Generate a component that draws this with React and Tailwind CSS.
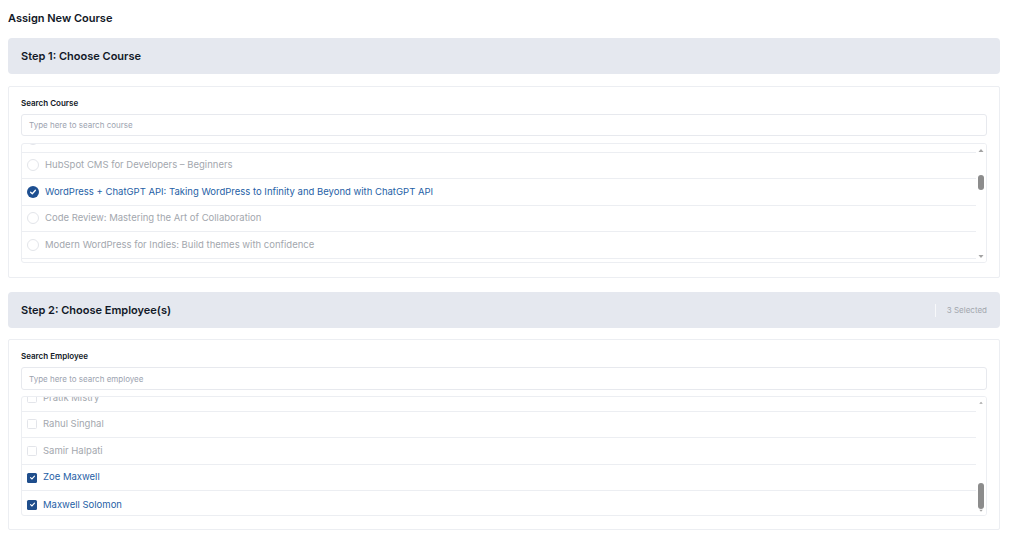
import React from 'react';

const courses = [
    { name: 'Designing Scalable Systems with Headless CMS', checked: false },
    { name: 'HubSpot CMS for Developers – Beginners', checked: false },
    { name: 'WordPress + ChatGPT API: Taking WordPress to Infinity and Beyond with ChatGPT API', checked: true },
    { name: 'Code Review: Mastering the Art of Collaboration', checked: false },
    { name: 'Modern WordPress for Indies: Build themes with confidence', checked: false },
];

const employees = [
    { name: 'Pratik Mistry', checked: false },
    { name: 'Rahul Singhal', checked: false },
    { name: 'Samir Halpati', checked: false },
    { name: 'Zoe Maxwell', checked: true },
    { name: 'Maxwell Solomon', checked: true },
];

const Radio = ({ checked }) => (
    checked ? (
        <span className="w-[12px] h-[12px] rounded-full bg-[#1d4f91] flex items-center justify-center shrink-0">
            <svg width="8" height="8" viewBox="0 0 8 8"><path d="M1.6 4.2 L3.3 5.8 L6.4 2.3" stroke="#fff" strokeWidth="1.3" fill="none" strokeLinecap="round" strokeLinejoin="round" /></svg>
        </span>
    ) : (
        <span className="w-[12px] h-[12px] rounded-full border border-[#e3e5ea] bg-white shrink-0" />
    )
);

const Checkbox = ({ checked }) => (
    checked ? (
        <span className="w-[10px] h-[10px] rounded-[1.5px] bg-[#1f4e8c] flex items-center justify-center shrink-0">
            <svg width="7" height="7" viewBox="0 0 8 8"><path d="M1.8 4.2 L3.4 5.7 L6.3 2.5" stroke="#fff" strokeWidth="1.3" fill="none" strokeLinecap="round" strokeLinejoin="round" /></svg>
        </span>
    ) : (
        <span className="w-[10px] h-[10px] rounded-[1.5px] border border-[#e3e5ea] bg-white shrink-0" />
    )
);

// fake thin scrollbar drawn at the right of a list
const Scrollbar = ({ thumbTop, thumbHeight }) => (
    <div className="w-[10px] shrink-0 flex flex-col items-center bg-white">
        <svg width="6" height="5" viewBox="0 0 6 5" className="mt-[4px]"><path d="M0.5 4 L3 1 L5.5 4 Z" fill="#a3a3a3" /></svg>
        <div className="flex-1 w-full flex flex-col items-center">
            <div className="w-[6px] rounded-full bg-[#8c8c8c]" style={{ marginTop: thumbTop, height: thumbHeight }} />
        </div>
        <svg width="6" height="5" viewBox="0 0 6 5" className="mb-[3px]"><path d="M0.5 1 L3 4 L5.5 1 Z" fill="#a3a3a3" /></svg>
    </div>
);

const StepHeader = ({ title, right }) => (
    <div className="h-[36px] bg-[#e5e8ef] rounded-[4px] flex items-center justify-between px-[13px]">
        <h2 className="text-[11px] font-semibold text-[#111827]">{title}</h2>
        {right}
    </div>
);

const App = () => {
    return (
        <div className="w-[1024px] h-[544px] bg-white px-[8px] pt-[12px] overflow-hidden" style={{ fontFamily: 'Inter, "Noto Sans", sans-serif' }}>
            <h1 className="text-[11px] font-semibold text-[#111827] leading-[13px]">Assign New Course</h1>

            {/* STEP 1 */}
            <div className="w-[992px] mt-[13px]">
                <StepHeader title="Step 1: Choose Course" />

                <div className="mt-[12px] border border-[#eceef2] rounded-[2px] px-[12px] pt-[11px] pb-[14px]">
                    <label className="block text-[8px] font-semibold text-[#111827] leading-[10px]">Search Course</label>
                    <div className="mt-[6px] h-[22px] border border-[#e7e9ee] rounded-[3px] flex items-center px-[7px]">
                        <span className="text-[8px] text-[#9ca3af]">Type here to search course</span>
                    </div>

                    <div className="mt-[7px] h-[120px] border border-[#eceef2] rounded-[3px] flex overflow-hidden">
                        <div className="flex-1 overflow-hidden">
                            <div className="mt-[-18px]">
                                {courses.map((c, i) => (
                                    <div key={i} className="h-[26.5px] border-b border-[#eceef2] flex items-center gap-[6px] pl-[5px]">
                                        <Radio checked={c.checked} />
                                        <span className={`text-[9.5px] whitespace-nowrap ${c.checked ? 'text-[#1f5fa6]' : 'text-[#a3a7ae]'}`}>{c.name}</span>
                                    </div>
                                ))}
                            </div>
                        </div>
                        <Scrollbar thumbTop={22} thumbHeight={15} />
                    </div>
                </div>
            </div>

            {/* STEP 2 */}
            <div className="w-[992px] mt-[14px]">
                <StepHeader
                    title="Step 2: Choose Employee(s)"
                    right={
                        <div className="flex items-center gap-[11px]">
                            <span className="w-px h-[13px] bg-[#f7f8fa]" />
                            <span className="text-[8px] text-[#a3a7ae]">3 Selected</span>
                        </div>
                    }
                />

                <div className="mt-[11px] border border-[#eceef2] rounded-[2px] px-[12px] pt-[11px] pb-[13px]">
                    <label className="block text-[8px] font-semibold text-[#111827] leading-[10px]">Search Employee</label>
                    <div className="mt-[6px] h-[23px] border border-[#e7e9ee] rounded-[3px] flex items-center px-[7px]">
                        <span className="text-[8px] text-[#9ca3af]">Type here to search employee</span>
                    </div>

                    <div className="mt-[6px] h-[120px] border border-[#eceef2] rounded-[3px] flex overflow-hidden">
                        <div className="flex-1 overflow-hidden">
                            <div className="mt-[-12px]">
                                {employees.map((e, i) => (
                                    <div key={i} className={`h-[26.6px] flex items-center gap-[6px] pl-[5px] ${i < employees.length - 1 ? 'border-b border-[#eceef2]' : ''}`}>
                                        <Checkbox checked={e.checked} />
                                        <span className={`text-[9.5px] whitespace-nowrap ${e.checked ? 'text-[#1f5fa6]' : 'text-[#a3a7ae]'}`}>{e.name}</span>
                                    </div>
                                ))}
                            </div>
                        </div>
                        <Scrollbar thumbTop={78} thumbHeight={26} />
                    </div>
                </div>
            </div>
        </div>
    );
};

export default App;
